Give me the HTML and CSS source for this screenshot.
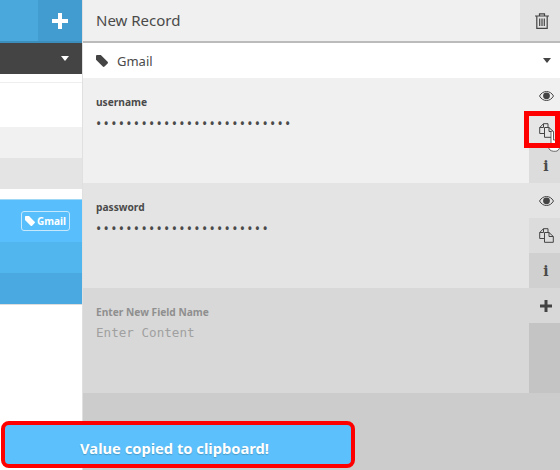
FILE: index.html
```html
<!DOCTYPE html>
<html lang="en-us">
<head>
  <meta charset="UTF-8">
  <meta name="viewport" content="width=device-width, initial-scale=1.0">
  <title>New Record</title>
  <link rel="stylesheet" href="styles.css">
</head>
<body>
  <div class="app">
    <!-- Record list, cut off on its left side -->
    <div class="list">
      <div class="list-head">
        <div class="list-head-fill"></div>
        <div class="add-record">
          <svg width="16" height="16" viewBox="0 0 16 16"><path d="M6 0h4v6h6v4h-6v6H6v-6H0V6h6z" fill="#fff"/></svg>
        </div>
      </div>
      <div class="list-filter"><span class="caret caret-white"></span></div>
      <div class="list-gap"></div>
      <div class="list-row row-white"></div>
      <div class="list-row row-light"></div>
      <div class="list-row row-grey"></div>
      <div class="list-space"></div>
      <div class="list-row row-active">
        <span class="tag-badge">
          <svg width="10" height="10" viewBox="0 0 12 12"><path d="M0 1.2C0 .5.5 0 1.2 0h3.600l6.800 6.800c.5.5.5 1.200 0 1.700l-3.100 3.100c-.5.5-1.200.5-1.700 0L0 4.800z" fill="#fff"/></svg>
          Gmail
        </span>
      </div>
      <div class="list-row row-blue2"></div>
      <div class="list-row row-blue3"></div>
    </div>

    <!-- Record editor -->
    <div class="editor">
      <div class="editor-head">
        <div class="editor-title">New Record</div>
        <div class="trash">
          <svg width="14" height="16" viewBox="0 0 14 16" fill="none" stroke="#444" stroke-width="1.2"><path d="M0 3h14M4.500 3V.8h5V3M1.800 3v12.300h10.400V3M4.700 5.500v7.500M7 5.500v7.500M9.300 5.500v7.500"/></svg>
        </div>
      </div>
      <div class="tag-select">
        <svg width="12" height="12" viewBox="0 0 12 12"><path d="M0 1.2C0 .5.5 0 1.2 0h3.600l6.800 6.800c.5.5.5 1.200 0 1.700l-3.100 3.100c-.5.5-1.200.5-1.700 0L0 4.800z" fill="#444"/></svg>
        <span class="tag-name">Gmail</span>
        <span class="caret caret-dark"></span>
      </div>

      <div class="field field-1">
        <div class="field-body">
          <div class="field-label">username</div>
          <div class="field-value">••••••••••••••••••••••••••</div>
        </div>
        <div class="field-tools">
          <div class="tool">
            <svg width="15" height="10" viewBox="0 0 15 10"><path d="M.5 5C2.200 2 4.700.5 7.500.5S12.800 2 14.500 5c-1.700 3-4.200 4.500-7 4.500S2.200 8 .5 5z" fill="none" stroke="#444"/><circle cx="7.500" cy="4.800" r="3.400" fill="#444"/></svg>
          </div>
          <div class="tool tool-hover">
            <svg width="15" height="15" viewBox="0 0 15 15" fill="none" stroke="#444"><path d="M5.500 10.500H.7V4.500L4.500.7H9V4.500M4.500.7V4.500H.7"/><path d="M5.500 4.500H10L14.300 8.500V14.300H5.500zM10 4.500V8.500H14.300"/></svg>
          </div>
          <div class="tool tool-info"><span class="info">i</span></div>
        </div>
      </div>

      <div class="field field-2">
        <div class="field-body">
          <div class="field-label">password</div>
          <div class="field-value">•••••••••••••••••••••••</div>
        </div>
        <div class="field-tools">
          <div class="tool">
            <svg width="15" height="10" viewBox="0 0 15 10"><path d="M.5 5C2.200 2 4.700.5 7.500.5S12.800 2 14.500 5c-1.700 3-4.200 4.500-7 4.500S2.200 8 .5 5z" fill="none" stroke="#444"/><circle cx="7.500" cy="4.800" r="3.400" fill="#444"/></svg>
          </div>
          <div class="tool tool-copy">
            <svg width="15" height="15" viewBox="0 0 15 15" fill="none" stroke="#444"><path d="M5.500 10.500H.7V4.500L4.500.7H9V4.500M4.500.7V4.500H.7"/><path d="M5.500 4.500H10L14.300 8.500V14.300H5.500zM10 4.500V8.500H14.300"/></svg>
          </div>
          <div class="tool tool-info"><span class="info">i</span></div>
        </div>
      </div>

      <div class="field field-new">
        <div class="field-body">
          <div class="field-label">Enter New Field Name</div>
          <div class="field-content">Enter Content</div>
        </div>
        <div class="field-tools">
          <div class="tool">
            <svg width="12" height="12" viewBox="0 0 12 12"><path d="M4.500 0h3v4.500H12v3H7.500V12h-3V7.500H0v-3h4.500z" fill="#444"/></svg>
          </div>
          <div class="tool-fill"></div>
        </div>
      </div>
      <div class="editor-foot"></div>
    </div>
  </div>

  <!-- Overlays -->
  <svg class="hand" width="12" height="22" viewBox="0 0 12 22"><path d="M2 20c-1-1-2-3-2-5l3 1V2c0-1.300 2.500-1.300 2.500 0v8H10c2 0 2 2 2 4 0 4-1 6-3 7-2 .5-5 .5-7-1z" fill="#fff" stroke="#444" stroke-width=".8"/></svg>
  <div class="mark-copy"></div>
  <div class="toast">Value copied to clipboard!</div>
</body>
</html>
```

FILE: styles.css
```css
/* Layout */
html, body {
  margin: 0;
  padding: 0;
}
body {
  width: 560px;
  height: 470px;
  overflow: hidden;
  position: relative;
  background-color: #fff;
  font-family: "Noto Sans", sans-serif;
  color: #4a4a4a;
}
.app {
  display: flex;
  height: 470px;
}

/* Left list */
.list {
  width: 82px;
  border-right: 1px solid #e0e0e0;
  display: flex;
  flex-direction: column;
}
.list-head {
  display: flex;
  height: 43px;
  background-color: #4aa8dc;
  border-bottom: 2px solid #3c8fbd;
  box-sizing: border-box;
}
.list-head-fill {
  flex: 1;
}
.add-record {
  width: 44px;
  background-color: #429ccf;
  display: flex;
  align-items: center;
  justify-content: center;
}
.list-filter {
  height: 31px;
  background-color: #444;
  display: flex;
  align-items: center;
  justify-content: flex-end;
  padding-right: 13px;
}
.list-gap {
  height: 8px;
  border-bottom: 1px solid #eee;
}
.list-row {
  height: 31px;
  display: flex;
  align-items: center;
  justify-content: flex-end;
}
.row-white {
  height: 44px;
}
.row-light {
  background-color: #f1f1f1;
}
.row-grey {
  background-color: #e4e4e4;
}
.list-space {
  height: 10px;
}
.row-active {
  height: 43px;
  background-color: #59bffc;
  padding-right: 12px;
  border-top: 1px solid #9fd8f5;
  box-sizing: border-box;
}
.row-blue2 {
  background-color: #51b5ee;
}
.row-blue3 {
  background-color: #49a9e0;
  border-bottom: 1px solid #ddd;
}
.tag-badge {
  display: flex;
  align-items: center;
  gap: 2px;
  height: 18px;
  padding: 0 3px;
  border: 1px solid #c5e8fc;
  border-radius: 3px;
  color: #fff;
  font-size: 10px;
  font-weight: 700;
}

/* Editor */
.editor {
  flex: 1;
  display: flex;
  flex-direction: column;
}
.editor-head {
  display: flex;
  height: 43px;
  box-sizing: border-box;
  background-color: #f0f0f0;
  border-bottom: 2px solid #bbb;
}
.editor-title {
  flex: 1;
  padding-left: 13px;
  font-size: 15px;
  line-height: 41px;
}
.trash {
  width: 40px;
  background-color: #e3e3e3;
  display: flex;
  align-items: center;
  justify-content: center;
  padding-left: 3px;
  box-sizing: border-box;
}
.tag-select {
  height: 35px;
  background-color: #fff;
  display: flex;
  align-items: center;
  padding: 0 9px 0 13px;
  font-size: 13px;
}
.tag-name {
  flex: 1;
  margin-left: 9px;
}
.caret {
  width: 0;
  height: 0;
  border-left: 4px solid transparent;
  border-right: 4px solid transparent;
}
.caret-white {
  border-top: 5px solid #fff;
}
.caret-dark {
  border-top: 5px solid #444;
}

.field {
  display: flex;
  height: 105px;
}
.field-1 {
  background-color: #f0f0f0;
}
.field-2 {
  background-color: #e4e4e4;
}
.field-new {
  background-color: #d8d8d8;
}
.field-body {
  flex: 1;
  padding: 17px 13px 0;
}
.field-label {
  font-size: 10.2px;
  font-weight: 700;
  line-height: 15px;
}
.field-value {
  margin-top: 5px;
  font-size: 14px;
  line-height: 18px;
  letter-spacing: 2.3px;
}
.field-new .field-label {
  color: #8f8f8f;
}
.field-content {
  margin-top: 4px;
  font-family: "DejaVu Sans Mono", monospace;
  font-size: 12.6px;
  line-height: 17px;
  color: #a0a0a0;
}
.field-tools {
  width: 31px;
  display: flex;
  flex-direction: column;
}
.tool {
  height: 35px;
  display: flex;
  align-items: center;
  justify-content: center;
  padding-left: 3px;
  box-sizing: border-box;
}
.tool-hover {
  background-color: #e6e6e6;
}
.tool-copy {
  background-color: #dcdcdc;
}
.tool-info {
  background-color: #dcdcdc;
}
.field-2 .tool-info {
  background-color: #d0d0d0;
}
.tool-fill {
  flex: 1;
  background-color: #c4c4c4;
}
.info {
  font-family: "DejaVu Serif", serif;
  font-size: 14px;
  font-weight: 700;
}
.editor-foot {
  flex: 1;
  background-color: #ccc;
}

/* Things on top of the page */
.mark-copy {
  position: absolute;
  left: 524px;
  top: 111px;
  width: 36px;
  height: 37px;
  box-sizing: border-box;
  border: 5px solid #f00;
}
.hand {
  position: absolute;
  left: 548px;
  top: 130px;
}
.toast {
  position: absolute;
  left: 1px;
  top: 421px;
  width: 354px;
  height: 47px;
  padding-right: 7px;
  box-sizing: border-box;
  border: 4px solid #f00;
  border-radius: 8px;
  background-color: #5bc0fb;
  color: #fff;
  font-size: 14.7px;
  font-weight: 700;
  text-align: center;
  line-height: 47px;
  text-shadow: 0 1px 1px rgba(0, 0, 0, 0.2);
}
```
